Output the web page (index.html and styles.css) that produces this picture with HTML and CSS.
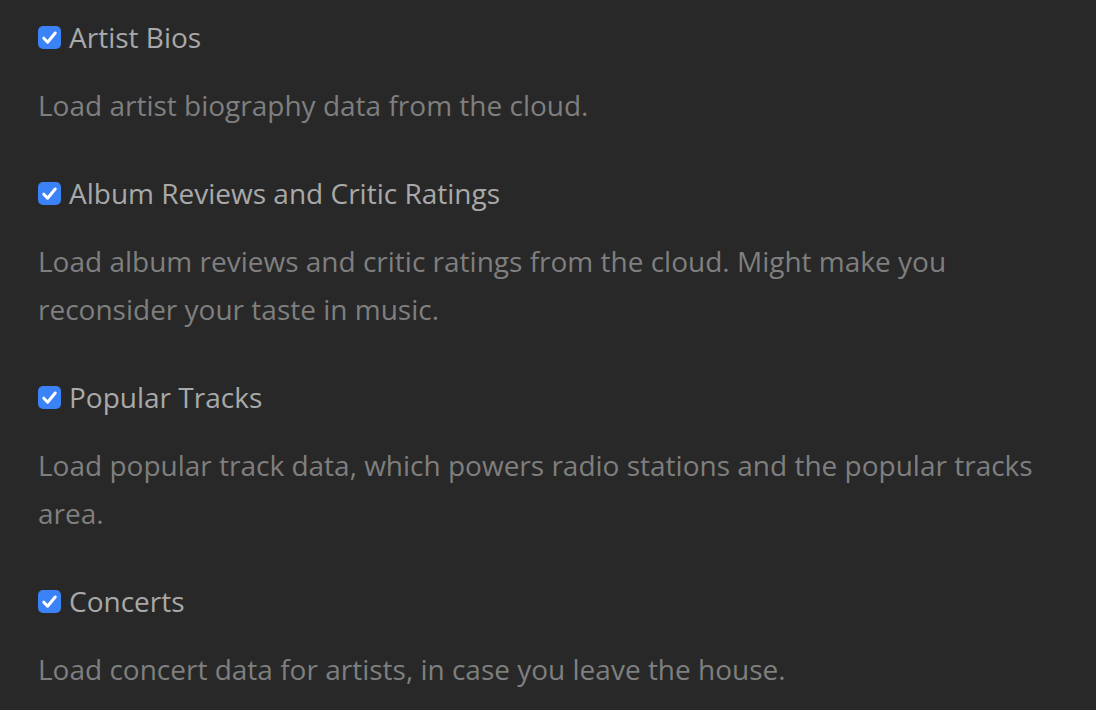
FILE: index.html
```html
<!DOCTYPE html>
<html>
<head>
<meta charset="utf-8">
<link rel="stylesheet" href="styles.css">
</head>
<body>
<div class="settings">
  <section class="option">
    <label class="option-label"><span class="check"><svg viewBox="0 0 23 23"><path d="M5.8 12.2 L9.6 16.2 L17.2 7"/></svg></span>Artist Bios</label>
    <p class="option-desc">Load artist biography data from the cloud.</p>
  </section>
  <section class="option">
    <label class="option-label"><span class="check"><svg viewBox="0 0 23 23"><path d="M5.8 12.2 L9.6 16.2 L17.2 7"/></svg></span>Album Reviews and Critic Ratings</label>
    <p class="option-desc">Load album reviews and critic ratings from the cloud. Might make you reconsider your taste in music.</p>
  </section>
  <section class="option">
    <label class="option-label"><span class="check"><svg viewBox="0 0 23 23"><path d="M5.8 12.2 L9.6 16.2 L17.2 7"/></svg></span>Popular Tracks</label>
    <p class="option-desc">Load popular track data, which powers radio stations and the popular tracks area.</p>
  </section>
  <section class="option">
    <label class="option-label"><span class="check"><svg viewBox="0 0 23 23"><path d="M5.8 12.2 L9.6 16.2 L17.2 7"/></svg></span>Concerts</label>
    <p class="option-desc">Load concert data for artists, in case you leave the house.</p>
  </section>
</div>
</body>
</html>
```
FILE: styles.css
```css
html, body {
  margin: 0;
  padding: 0;
  background: #282828;
}
body {
  font-family: "Open Sans", "Noto Sans", sans-serif;
  -webkit-font-smoothing: antialiased;
}
.settings {
  padding: 17px 38px 0 38px;
  width: 1010px;
}
.option {
  margin-bottom: 44px;
}
.option-label {
  display: flex;
  align-items: center;
  gap: 8px;
  font-size: 28px;
  line-height: 40px;
  color: #a9a9a9;
}
.check {
  width: 23px;
  height: 23px;
  border-radius: 5px;
  background: #3b82f6;
  display: flex;
  flex: none;
  margin-top: 1px;
}
.check svg {
  width: 23px;
  height: 23px;
}
.check path {
  fill: none;
  stroke: #fff;
  stroke-width: 3;
  stroke-linecap: round;
  stroke-linejoin: round;
}
.option-desc {
  margin: 24px 0 0 0;
  font-size: 28px;
  line-height: 48px;
  color: #7f7f7f;
}
```
